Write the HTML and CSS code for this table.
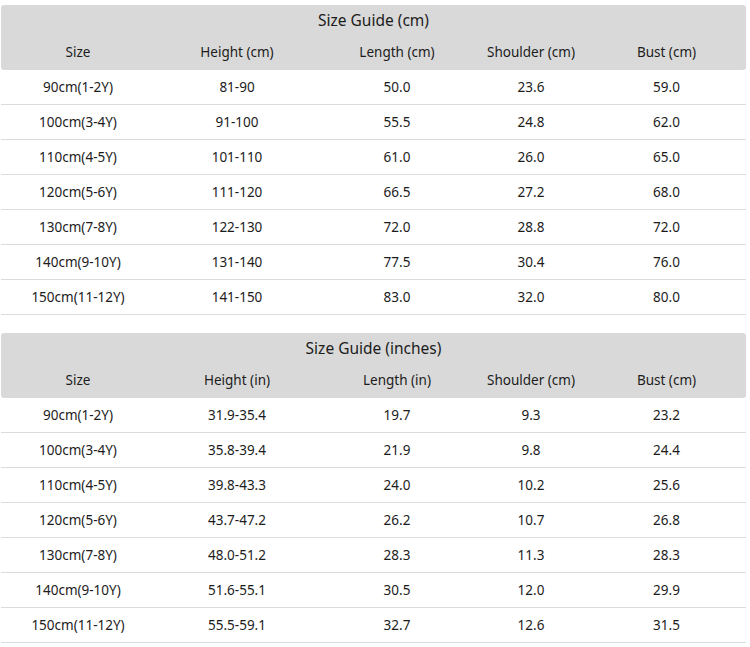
FILE: index.html
```html
<!DOCTYPE html>
<html>
<head>
<meta charset="utf-8">
<link rel="stylesheet" href="styles.css">
</head>
<body>
<div class="page">
  <section class="guide">
    <div class="head">
      <div class="title">Size Guide (cm)</div>
      <div class="row cols">
        <div>Size</div><div>Height (cm)</div><div>Length (cm)</div><div>Shoulder (cm)</div><div>Bust (cm)</div>
      </div>
    </div>
    <div class="row data"><div>90cm(1-2Y)</div><div>81-90</div><div>50.0</div><div>23.6</div><div>59.0</div></div>
    <div class="row data"><div>100cm(3-4Y)</div><div>91-100</div><div>55.5</div><div>24.8</div><div>62.0</div></div>
    <div class="row data"><div>110cm(4-5Y)</div><div>101-110</div><div>61.0</div><div>26.0</div><div>65.0</div></div>
    <div class="row data"><div>120cm(5-6Y)</div><div>111-120</div><div>66.5</div><div>27.2</div><div>68.0</div></div>
    <div class="row data"><div>130cm(7-8Y)</div><div>122-130</div><div>72.0</div><div>28.8</div><div>72.0</div></div>
    <div class="row data"><div>140cm(9-10Y)</div><div>131-140</div><div>77.5</div><div>30.4</div><div>76.0</div></div>
    <div class="row data"><div>150cm(11-12Y)</div><div>141-150</div><div>83.0</div><div>32.0</div><div>80.0</div></div>
  </section>
  <section class="guide">
    <div class="head">
      <div class="title">Size Guide (inches)</div>
      <div class="row cols">
        <div>Size</div><div>Height (in)</div><div>Length (in)</div><div>Shoulder (cm)</div><div>Bust (cm)</div>
      </div>
    </div>
    <div class="row data"><div>90cm(1-2Y)</div><div>31.9-35.4</div><div>19.7</div><div>9.3</div><div>23.2</div></div>
    <div class="row data"><div>100cm(3-4Y)</div><div>35.8-39.4</div><div>21.9</div><div>9.8</div><div>24.4</div></div>
    <div class="row data"><div>110cm(4-5Y)</div><div>39.8-43.3</div><div>24.0</div><div>10.2</div><div>25.6</div></div>
    <div class="row data"><div>120cm(5-6Y)</div><div>43.7-47.2</div><div>26.2</div><div>10.7</div><div>26.8</div></div>
    <div class="row data"><div>130cm(7-8Y)</div><div>48.0-51.2</div><div>28.3</div><div>11.3</div><div>28.3</div></div>
    <div class="row data"><div>140cm(9-10Y)</div><div>51.6-55.1</div><div>30.5</div><div>12.0</div><div>29.9</div></div>
    <div class="row data"><div>150cm(11-12Y)</div><div>55.5-59.1</div><div>32.7</div><div>12.6</div><div>31.5</div></div>
  </section>
</div>
</body>
</html>
```
FILE: styles.css
```css
html, body {
  margin: 0;
  padding: 0;
  background: #ffffff;
}
body {
  font-family: "Noto Sans", "Open Sans", Arial, sans-serif;
  color: #1c1c1c;
  font-size: 13.5px;
}
.page {
  padding: 5px 3px 0 1px;
  display: flex;
  flex-direction: column;
  gap: 18px;
}
.guide {
  width: 745px;
}
.head {
  background: #d9d9d9;
  border-radius: 3px;
}
.title {
  height: 30px;
  display: flex;
  align-items: center;
  justify-content: center;
  font-size: 15.5px;
}
.row {
  display: grid;
  grid-template-columns: 154px 164px 156px 112px 159px;
  align-items: center;
  text-align: center;
}
.cols {
  height: 35px;
  padding-bottom: 2px;
  box-sizing: border-box;
}
.data {
  height: 35px;
  box-sizing: border-box;
  border-bottom: 1px solid #dcdcdc;
}
```
